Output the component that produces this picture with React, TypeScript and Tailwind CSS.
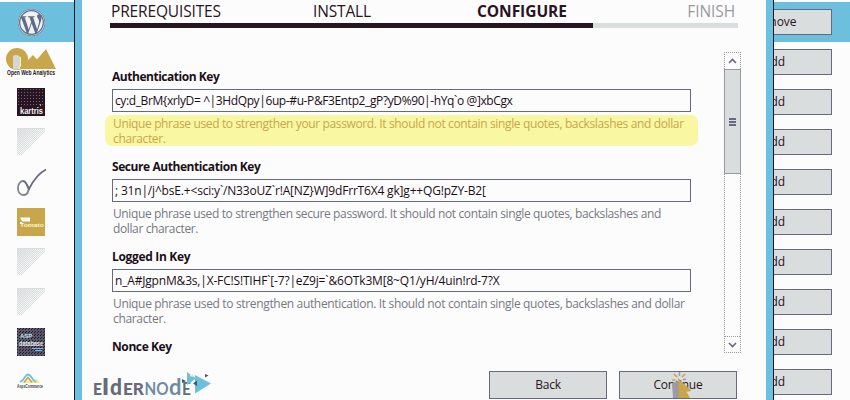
import React from 'react';
import { FaWordpress } from 'react-icons/fa';

type Field = { label: string; value: string; lines: string[]; labelTrack: string; valueTrack: string; lineTrack: string; marked?: boolean };

const fields: Field[] = [
  {
    label: 'Authentication Key',
    value: 'cy:d_BrM{xrlyD= ^|3HdQpy|6up-#u-P&F3Entp2_gP?yD%90|-hYq`o @]xbCgx',
    lines: ['Unique phrase used to strengthen your password. It should not contain single quotes, backslashes and dollar', 'character.'],
    labelTrack: 'tracking-[-0.47px]',
    valueTrack: 'tracking-[-0.39px]',
    lineTrack: 'tracking-[-0.365px]',
    marked: true,
  },
  {
    label: 'Secure Authentication Key',
    value: '; 31n|/j^bsE.+<sci:y`/N33oUZ`r!A[NZ}W]9dFrrT6X4 gk]g++QG!pZY-B2[',
    lines: ['Unique phrase used to strengthen secure password. It should not contain single quotes, backslashes and', 'dollar character.'],
    labelTrack: 'tracking-[-0.43px]',
    valueTrack: 'tracking-[-0.18px]',
    lineTrack: 'tracking-[-0.375px]',
  },
  {
    label: 'Logged In Key',
    value: 'n_A#JgpnM&3s,|X-FC!S!TIHF`[-7?|eZ9j=`&6OTk3M[8~Q1/yH/4uin!rd-7?X',
    lines: ['Unique phrase used to strengthen authentication. It should not contain single quotes, backslashes and dollar', 'character.'],
    labelTrack: 'tracking-[-0.33px]',
    valueTrack: 'tracking-[-0.18px]',
    lineTrack: 'tracking-[-0.34px]',
  },
];

function Placeholder() {
  return (
    <svg width="28" height="28" viewBox="0 0 28 28" shapeRendering="crispEdges">
      <defs>
        <pattern id="grain" width="2" height="2" patternUnits="userSpaceOnUse">
          <path d="M0 0h1v1H0zM1 1h1v1H1z" fill="#d9dddd" />
        </pattern>
        <linearGradient id="fade" x1="0" y1="0" x2="1" y2="1">
          <stop offset="0" stopColor="#d9dddd" />
          <stop offset="0.55" stopColor="#d9dddd" stopOpacity="0" />
        </linearGradient>
      </defs>
      <path d="M0 0h28v4L5 27H0z" fill="url(#grain)" />
      <path d="M0 0h28v28H0z" fill="url(#fade)" />
      <path d="M0 .5h28" stroke="#d9dddd" />
    </svg>
  );
}

function Owa() {
  return (
    <svg width="62" height="40" viewBox="0 0 62 40">
      <circle cx="17" cy="17" r="11" fill="#c9a64a" />
      <path d="M20 27v-8h7l6-6 4 4.500L46 7l10 20z" fill="#c9a64a" />
      <path d="M13 27.500V15q0-2 3-2t4 2v12.500z" fill="#d5d7d5" />
      <path d="M20.500 15v9l-2 3" fill="none" stroke="#faf7a2" strokeWidth="1" />
      <text x="7" y="33" textLength="48" lengthAdjust="spacingAndGlyphs" fontFamily="Liberation Sans" fontSize="6.500" fontWeight="bold" fill="#291421">Open Web Analytics</text>
    </svg>
  );
}

function Kartris() {
  return (
    <svg width="28" height="28" viewBox="0 0 28 28" shapeRendering="crispEdges">
      <defs>
        <pattern id="dots" width="3" height="3" patternUnits="userSpaceOnUse">
          <rect x="1" y="1" width="1" height="1" fill="#666a7d" />
        </pattern>
      </defs>
      <rect width="28" height="28" fill="#291421" />
      <rect width="28" height="19" fill="url(#dots)" />
      <text x="3" y="26" textLength="23" lengthAdjust="spacingAndGlyphs" fontFamily="Liberation Sans" fontSize="9" fontWeight="bold" fill="#f4f4f4">kartris</text>
      <rect x="23" y="16" width="1" height="2" fill="#c9a64a" />
    </svg>
  );
}

function Check() {
  return (
    <svg width="32" height="30" viewBox="0 0 32 30" fill="none">
      <path d="M14 23C12 17 10.500 14 8 14S3 17 3 21s2 7 5.500 7c3 0 4.500-2 5-5" stroke="#85858f" strokeWidth="1.900" />
      <path d="M8 14c3 0 4 4 6 8C18 14 24 6 31 2.500" stroke="#666a7d" strokeWidth="1.700" />
    </svg>
  );
}

function GoldCart() {
  return (
    <svg width="28" height="28" viewBox="0 0 28 28">
      <rect width="28" height="28" fill="#c9a64a" />
      <path d="M3 9.500h10v4H5zM3 14h2v2H3z" fill="#fcfcfc" />
      <text x="3" y="18.500" textLength="24" lengthAdjust="spacingAndGlyphs" fontFamily="Liberation Sans" fontSize="6" fontWeight="bold" fill="#faf7c8">Tomato</text>
    </svg>
  );
}

function Database() {
  return (
    <svg width="28" height="28" viewBox="0 0 28 28" shapeRendering="crispEdges">
      <defs>
        <pattern id="mesh" width="3" height="3" patternUnits="userSpaceOnUse">
          <path d="M0 0h1v1H0zM2 1h1v1H2z" fill="#291421" />
        </pattern>
      </defs>
      <rect width="28" height="28" fill="#56576a" />
      <rect width="28" height="28" fill="url(#mesh)" />
      <text x="3" y="10" fontFamily="Liberation Sans" fontSize="6" fontWeight="bold" fill="#c5e3ee">ASP</text>
      <text x="2" y="18" textLength="24" lengthAdjust="spacingAndGlyphs" fontFamily="Liberation Sans" fontSize="6.500" fontWeight="bold" fill="#e4edf0">database</text>
      <path d="M15 20.500h11M18 22.500h7" stroke="#6bbfdf" strokeWidth="1" />
    </svg>
  );
}

function Commerce() {
  return (
    <svg width="30" height="20" viewBox="0 0 30 20">
      <path d="M4 11h20l-3-4z" fill="#f5eb91" />
      <path d="M4 10C9 8 9 2.500 12 2.500S16 8 20 10" fill="none" stroke="#6bbfdf" strokeWidth="1.800" />
      <path d="M8 10.500l4-5 4 5" fill="none" stroke="#c9a64a" strokeWidth="1.600" />
      <text x="1" y="16" textLength="26" lengthAdjust="spacingAndGlyphs" fontFamily="Liberation Sans" fontSize="4.500" fontWeight="bold" fill="#3f4350">AspxCommerce</text>
    </svg>
  );
}

const rail = [<Owa />, <Kartris />, <Placeholder />, <Check />, <GoldCart />, <Placeholder />, <Placeholder />, <Database />];

function Rail() {
  return (
    <div className="flex w-[74px] shrink-0 flex-col pt-0.5">
      <div className="flex h-10 items-center bg-[#6bbfdf] bg-[radial-gradient(#8fb3bd_0.6px,transparent_0.7px)] bg-size-[5px_5px] pl-[18px]">
        <FaWordpress className="size-[27px] rounded-full bg-[#5f6c82] text-[#eef2f4]" />
      </div>
      {rail.map((icon, i) => (
        <div key={i} className="flex h-10 w-[62px] shrink-0 items-center justify-center">{icon}</div>
      ))}
      <div className="flex h-[38px] w-[62px] shrink-0 items-start justify-center pt-2.5">
        <Commerce />
      </div>
    </div>
  );
}

function Actions() {
  return (
    <div className="flex min-w-0 flex-1 flex-col overflow-hidden pt-0.5 text-[12px]">
      {['Remove', 'Add', 'Add', 'Add', 'Add', 'Add', 'Add', 'Add', 'Add', 'Add'].map((name, i) => (
        <div key={i} className={i === 0 ? 'flex h-10 shrink-0 items-center bg-[#6bbfdf] bg-[radial-gradient(#8fb3bd_0.6px,transparent_0.7px)] bg-size-[5px_5px]' : 'flex h-10 shrink-0 items-center'}>
          <button className="-ml-[58px] h-[26px] w-[116px] shrink-0 border border-[#666a7d] bg-[#d9dddd] leading-4">{name}</button>
        </div>
      ))}
    </div>
  );
}

function Steps() {
  return (
    <div className="h-[28px] w-[628px]">
      <div className="flex h-[23px] text-[15.5px] leading-[22px]">
        <span className="w-[203px] pl-px tracking-[-0.15px]">PREREQUISITES</span>
        <span className="w-[164px] tracking-[-0.15px]">INSTALL</span>
        <span className="flex-1 font-bold tracking-[-0.05px]">CONFIGURE</span>
        <span className="pr-[3px] tracking-[-0.1px] text-[#999a9d]">FINISH</span>
      </div>
      <div className="h-[5px] bg-[#d9dddd]">
        <div className="h-full w-[483px] bg-[#291421]" />
      </div>
    </div>
  );
}

function FieldBlock({ f }: { f: Field }) {
  return (
    <div className="h-[90px]">
      <div className={`h-[20px] text-[12px] leading-[16px] font-bold whitespace-nowrap text-[#1c0e18] ${f.labelTrack}`}>{f.label}</div>
      <div className={`h-[23px] w-[579px] border border-[#666a7d] pl-[2px] text-[12px] leading-[21px] whitespace-pre text-[#1c0e18] ${f.valueTrack}`}>{f.value}</div>
      <div className={`mt-[3px] -ml-[7px] h-[31px] w-[593px] rounded-[7px] pt-px pl-2 text-[12px] leading-[15px] whitespace-nowrap ${f.lineTrack} ${f.marked ? 'bg-[#faf7a2] text-[#c9a64a]' : 'text-[#777982]'}`}>
        {f.lines.map((line) => (
          <div key={line}>{line}</div>
        ))}
      </div>
    </div>
  );
}

function Scrollbar() {
  return (
    <div className="mt-[-17px] flex h-[301px] w-[17px] flex-col border border-dotted border-[#999a9d]">
      <div className="flex h-4 items-center justify-center">
        <svg width="9" height="6" viewBox="0 0 9 6"><path d="M1 5l3.500-3.500L8 5" fill="none" stroke="#666a7d" strokeWidth="1.600" /></svg>
      </div>
      <div className="-mx-px flex h-[105px] flex-col items-center justify-center gap-px border border-[#999a9d] bg-[#d9dddd]">
        <div className="h-[2px] w-[7px] bg-[#666a7d]" />
        <div className="h-[2px] w-[7px] bg-[#666a7d]" />
        <div className="h-[2px] w-[7px] bg-[#666a7d]" />
      </div>
      <div className="flex-1" />
      <div className="flex h-4 items-center justify-center border-t border-dotted border-[#999a9d]">
        <svg width="9" height="6" viewBox="0 0 9 6"><path d="M1 1l3.500 3.500L8 1" fill="none" stroke="#666a7d" strokeWidth="1.600" /></svg>
      </div>
    </div>
  );
}

function Logo() {
  return (
    <svg className="mt-[9px]" width="122" height="30" viewBox="0 0 122 30">
      <g fontFamily="Lato" fontWeight="900" fill="#666a7d">
        <text x="1" y="26" fontSize="16.500" textLength="9" lengthAdjust="spacingAndGlyphs">E</text>
        <text x="10" y="26" fontSize="23" textLength="7" lengthAdjust="spacingAndGlyphs">l</text>
        <text x="18" y="26" fontSize="23" textLength="12" lengthAdjust="spacingAndGlyphs">d</text>
        <text x="31" y="26" fontSize="16.500" textLength="21" lengthAdjust="spacingAndGlyphs">ER</text>
      </g>
      <g fontFamily="Lato" fontWeight="700" fill="#6e8ca0">
        <text x="52.500" y="26" fontSize="16.500" textLength="24" lengthAdjust="spacingAndGlyphs">NO</text>
        <text x="77" y="26" fontSize="23" textLength="12.500" lengthAdjust="spacingAndGlyphs">d</text>
        <text x="90" y="26" fontSize="16.500" textLength="9" lengthAdjust="spacingAndGlyphs" fill="#666a7d">E</text>
      </g>
      <path d="M95 3l9 6.500-9 6.500z" fill="#6bbfdf" />
      <path d="M103 6l16 8.500L103 24.500z" fill="#6bbfdf" />
      <path d="M90 10l4 2-4 2zM105 11.500v5.500l-4-2.500zM113 5l3.500 1.500-3.500 2z" fill="#4f5367" />
      <path d="M98 5.500h3v2h-3z" fill="#f3efb0" />
    </svg>
  );
}

function Pointer() {
  return (
    <svg className="absolute top-0 left-[49px]" width="28" height="26" viewBox="0 0 28 26">
      <path d="M3 11l5-2 7 8v9H4z" fill="#9b9aa5" />
      <path d="M9 6l13.500 13-5 .8 3.500 6.200H10z" fill="#c9a64a" />
      <path d="M5 2l3 3M16 2l-3 3M3 8h3.500" stroke="#c9a64a" strokeWidth="1.700" />
      <path d="M10.500 0v4M14 7.500h3" stroke="#9b9aa5" strokeWidth="1.500" />
    </svg>
  );
}

export default function App() {
  return (
    <div className="flex h-[400px] w-[850px] overflow-hidden bg-[#fcfcfc] font-['Open_Sans',sans-serif] text-[#291421]">
      <Rail />
      <div className="flex w-[700px] shrink-0 flex-col border-x border-[#291421]">
        <div className="flex flex-1 flex-col border-x-[7px] border-[#6bbfdf] pl-[28px]">
          <Steps />
          <div className="flex h-[332px] pt-[41px]">
            <div className="w-[614px] pl-0.5">
              {fields.map((f) => <FieldBlock key={f.label} f={f} />)}
              <div className="text-[12px] leading-[16px] font-bold tracking-[-0.4px] text-[#1c0e18]">Nonce Key</div>
            </div>
            <Scrollbar />
          </div>
          <div className="-ml-[18px] flex">
            <Logo />
            <button className="mt-[11px] ml-[275px] h-[28px] w-[118px] border border-[#666a7d] bg-[#d9dddd] text-[12px] leading-4 tracking-[-0.3px]">Back</button>
            <button className="relative mt-[11px] ml-3 h-[28px] w-[118px] border border-[#666a7d] bg-[#d9dddd] text-[12px] leading-4 tracking-[-0.25px]">
              Continue
              <Pointer />
            </button>
          </div>
        </div>
      </div>
      <Actions />
    </div>
  );
}
